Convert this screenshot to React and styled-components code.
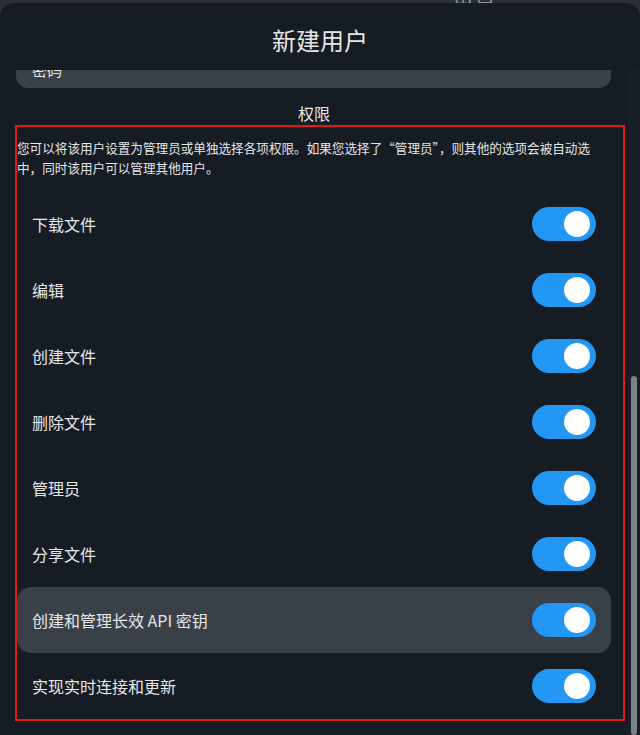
import React, { useLayoutEffect, useRef, useState } from "react";
import styled, { createGlobalStyle } from "styled-components";

const Global = createGlobalStyle`
  html, body { margin: 0; padding: 0; height: 100%; overflow: hidden; }
  body {
    background: #2b2f34;
    font-family: "Noto Sans CJK SC", "Noto Sans", sans-serif;
  }
  #root { height: 100%; }
`;

const Page = styled.div`
  height: 100vh;
  display: flex;
  flex-direction: column;
`;

const Backdrop = styled.div`
  height: 3px;
  flex: none;
  overflow: hidden;
  display: flex;
  align-items: flex-end;
  padding-left: 452px;
`;

const BackdropText = styled.span`
  font-size: 22px;
  line-height: 22px;
  color: #8d9298;
  flex: none;
`;

const Modal = styled.div`
  flex: 1;
  min-height: 0;
  background: #161c23;
  border-radius: 14px 14px 0 0;
  display: flex;
  flex-direction: column;
`;

const Header = styled.div`
  height: 67px;
  flex: none;
  box-sizing: border-box;
  padding-top: 21px;
  text-align: center;
`;

const Title = styled.h1`
  margin: 0;
  font-size: 24px;
  line-height: 32px;
  font-weight: 400;
  color: #e4e6e9;
`;

const Body = styled.div`
  flex: 1;
  min-height: 0;
  display: flex;
`;

const Viewport = styled.div`
  flex: 1;
  min-width: 0;
  overflow-y: scroll;
  scrollbar-width: none;
  &::-webkit-scrollbar { display: none; }
`;

const Track = styled.div`
  width: 12px;
  flex: none;
  box-sizing: border-box;
  padding: 0 3px;
  background: #181f26;
  display: flex;
  flex-direction: column;
`;

const Thumb = styled.div`
  flex: none;
  width: 6px;
  border-radius: 3px;
  background: #7e8286;
`;

const Content = styled.div`
  padding: 28px 0 14px 0;
  display: flex;
  flex-direction: column;
`;

const Field = styled.div`
  display: flex;
  flex-direction: column;
  gap: 6px;
  padding: 0 17px 0 16px;
  margin-bottom: 18px;
  &:last-of-type { margin-bottom: 15px; }
`;

const FieldLabel = styled.label`
  font-size: 14px;
  line-height: 20px;
  color: #e4e6e9;
`;

const Input = styled.div`
  height: 38px;
  box-sizing: border-box;
  background: #3a4048;
  border-radius: 12px;
  padding: 0 16px;
  display: flex;
  align-items: center;
  font-size: 15px;
  color: #e4e6e9;
`;

const SectionTitle = styled.h2`
  margin: 0 0 2px;
  font-size: 16px;
  line-height: 20px;
  font-weight: 400;
  text-align: center;
  color: #e4e6e9;
`;

const Section = styled.section`
  margin: 0 3px 0 15px;
  border: 2px solid #e3181d;
  padding: 11px 12px 0 0;
  display: flex;
  flex-direction: column;
`;

const Description = styled.p`
  margin: 0 0 13px;
  font-size: 12.6px;
  line-height: 20px;
  color: #e4e6e9;
`;

const Row = styled.div`
  height: 66px;
  box-sizing: border-box;
  padding: 0 15px;
  display: flex;
  align-items: center;
  justify-content: space-between;
  border-radius: 14px;
  background: ${(p) => (p.$active ? "#3a4048" : "transparent")};
`;

const RowLabel = styled.span`
  font-size: 16px;
  color: #e4e6e9;
`;

const Switch = styled.button`
  width: 64px;
  height: 34px;
  border: none;
  padding: 0 6px 0 0;
  border-radius: 17px;
  background: ${(p) => (p.$on ? "#2196f3" : "#5a6068")};
  display: flex;
  align-items: center;
  justify-content: ${(p) => (p.$on ? "flex-end" : "flex-start")};
  cursor: pointer;
`;

const Knob = styled.span`
  width: 26px;
  height: 26px;
  border-radius: 50%;
  background: #ffffff;
`;

const hiddenFields = [
  ["用户名", "用户名"],
  ["语言", "简体中文"],
  ["用户目录", "/"],
  ["作用域", "."],
  ["锁定密码", "否"],
  ["规则", "无"],
];

const permissions = [
  "下载文件",
  "编辑",
  "创建文件",
  "删除文件",
  "管理员",
  "分享文件",
  "创建和管理长效 API 密钥",
  "实现实时连接和更新",
];

export default function App() {
  const ref = useRef(null);
  const [thumb, setThumb] = useState({ top: 0, height: 0 });

  const update = () => {
    const el = ref.current;
    if (!el) return;
    const h = el.clientHeight;
    const sh = el.scrollHeight;
    setThumb({
      top: (el.scrollTop / sh) * h,
      height: (h / sh) * h,
    });
  };

  useLayoutEffect(() => {
    if (ref.current) ref.current.scrollTop = ref.current.scrollHeight;
    update();
  }, []);

  return (
    <>
      <Global />
      <Page>
        <Backdrop>
          <BackdropText>留言</BackdropText>
        </Backdrop>
        <Modal>
          <Header>
            <Title>新建用户</Title>
          </Header>
          <Body>
            <Viewport ref={ref} onScroll={update}>
              <Content>
                {hiddenFields.map(([label, value]) => (
                  <Field key={label}>
                    <FieldLabel>{label}</FieldLabel>
                    <Input>{value}</Input>
                  </Field>
                ))}
                <Field>
                  <FieldLabel>密码</FieldLabel>
                  <Input>密码</Input>
                </Field>
                <SectionTitle>权限</SectionTitle>
                <Section>
                  <Description>
                    您可以将该用户设置为管理员或单独选择各项权限。如果您选择了“管理员”，则其他的选项会被自动选中，同时该用户可以管理其他用户。
                  </Description>
                  {permissions.map((p, i) => (
                    <Row key={p} $active={i === 6}>
                      <RowLabel>{p}</RowLabel>
                      <Switch role="switch" aria-checked="true" $on>
                        <Knob />
                      </Switch>
                    </Row>
                  ))}
                </Section>
              </Content>
            </Viewport>
            <Track>
              <Thumb style={{ marginTop: thumb.top, height: thumb.height }} />
            </Track>
          </Body>
        </Modal>
      </Page>
    </>
  );
}
